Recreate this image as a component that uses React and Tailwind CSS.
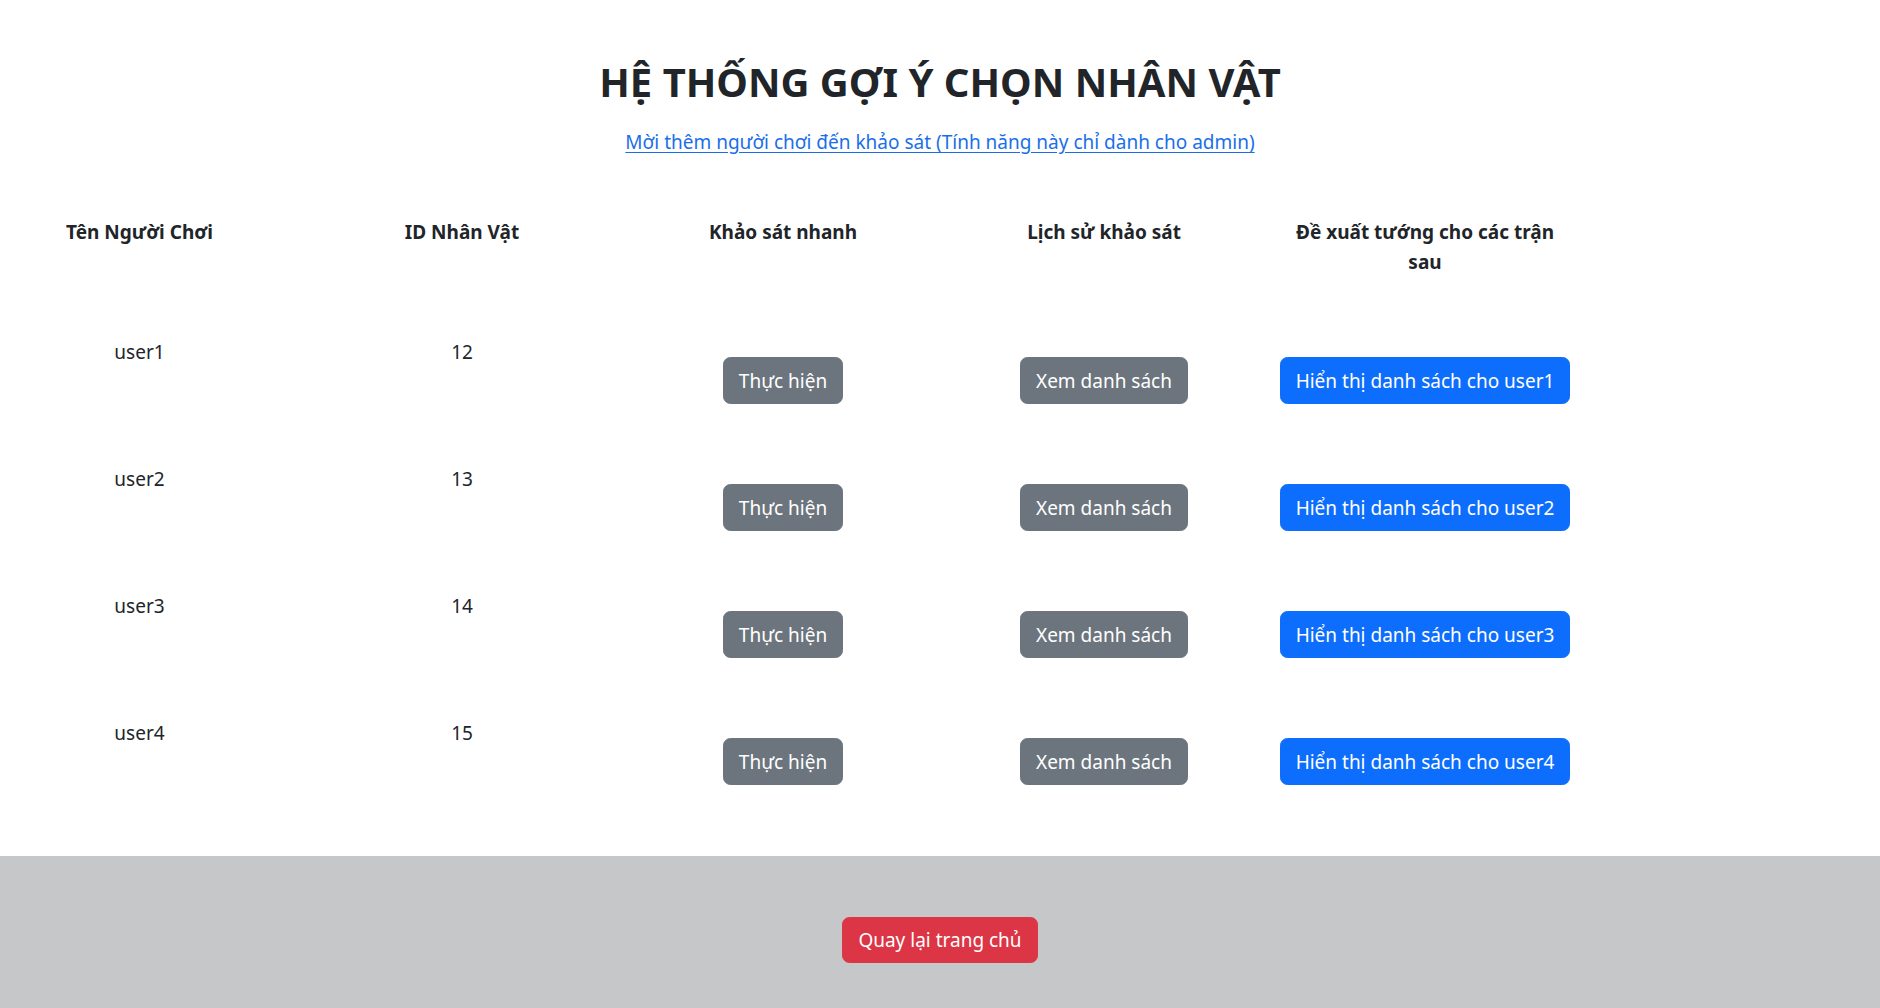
import React from "react";

const users = [
  { name: "user1", id: 12 },
  { name: "user2", id: 13 },
  { name: "user3", id: 14 },
  { name: "user4", id: 15 },
];

const cols = "grid grid-cols-[279px_366px_276px_366px_276px]";

export default function App() {
  return (
    <div className="min-h-[1008px] flex flex-col bg-white text-[#212529] font-['Noto_Sans',sans-serif]">
      <div className="pt-[58px] text-center">
        <h2 className="text-[40px] leading-[48px] font-bold">HỆ THỐNG GỢI Ý CHỌN NHÂN VẬT</h2>
        <div className="mt-[21px]">
          <a href="#" className="text-[19px] leading-[30px] text-[#1a6fe8] underline underline-offset-[3px]">
            Mời thêm người chơi đến khảo sát (Tính năng này chỉ dành cho admin)
          </a>
        </div>
      </div>

      <div className={`${cols} mt-[60px] text-[19px] leading-[30px] font-bold text-center`}>
        <div className="px-[10px]">Tên Người Chơi</div>
        <div className="px-[10px]">ID Nhân Vật</div>
        <div className="px-[10px]">Khảo sát nhanh</div>
        <div className="px-[10px]">Lịch sử khảo sát</div>
        <div className="px-[10px] flex flex-col items-center">
          <span className="whitespace-nowrap">Đề xuất tướng cho các trận</span>
          <span>sau</span>
        </div>
      </div>

      <div className="mt-[60px] flex flex-col gap-[60px] text-[19px] leading-[30px]">
        {users.map((u) => (
          <div key={u.name} className={`${cols} h-[67px] text-center`}>
            <div>{u.name}</div>
            <div>{u.id}</div>
            <div className="flex justify-center pt-[20px]">
              <button className="h-[47px] px-[15px] rounded-[7.5px] border border-[#6c757d] bg-[#6c757d] text-white whitespace-nowrap">
                Thực hiện
              </button>
            </div>
            <div className="flex justify-center pt-[20px]">
              <button className="h-[47px] px-[15px] rounded-[7.5px] border border-[#6c757d] bg-[#6c757d] text-white whitespace-nowrap">
                Xem danh sách
              </button>
            </div>
            <div className="flex justify-center pt-[20px]">
              <button className="h-[47px] px-[15px] rounded-[7.5px] border border-[#0d6efd] bg-[#0d6efd] text-white whitespace-nowrap">
                Hiển thị danh sách cho {u.name}
              </button>
            </div>
          </div>
        ))}
      </div>

      <div className="mt-[71px] bg-[#c6c7c9] pt-[61px] pb-[45px] flex justify-center">
        <button className="h-[46px] px-[15px] rounded-[7.5px] border border-[#dc3545] bg-[#dc3545] text-white text-[19px] leading-[30px] whitespace-nowrap">
          Quay lại trang chủ
        </button>
      </div>
    </div>
  );
}
